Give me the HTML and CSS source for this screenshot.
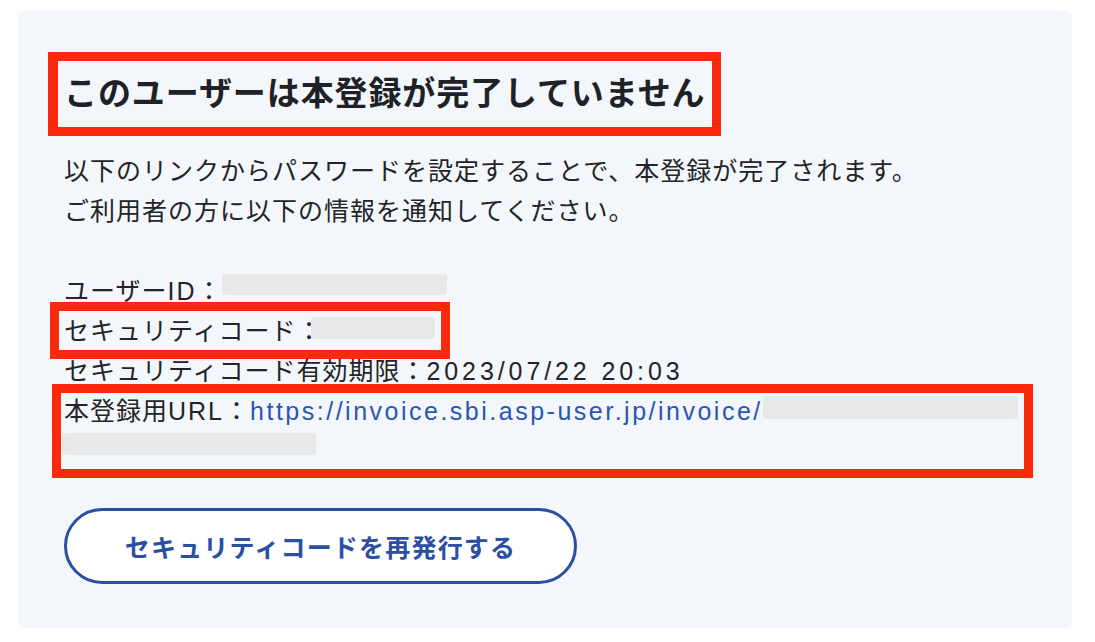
FILE: index.html
```html
<!DOCTYPE html>
<html lang="ja">
<head>
<meta charset="utf-8">
<title>本登録未完了</title>
<link rel="stylesheet" href="styles.css">
</head>
<body>
<div class="card">
  <h1 class="title">このユーザーは本登録が完了していません</h1>
  <p class="lead">以下のリンクからパスワードを設定することで、本登録が完了されます。<br>ご利用者の方に以下の情報を通知してください。</p>
  <div class="info">
    <div class="row">ユーザー<span class="lat">ID</span>：<span class="redact r-id"></span></div>
    <div class="row"><span class="hl-code">セキュリティコード：<span class="redact r-code"></span></span></div>
    <div class="row">セキュリティコード有効期限：<span class="num">2023/07/22 20:03</span></div>
    <div class="row hl-url">本登録用<span class="lat">URL</span>：<a class="link" href="#">https://invoice.sbi.asp-user.jp/invoice/<span class="redact r-url1"></span><br><span class="redact r-url2"></span></a></div>
  </div>
  <button class="reissue" type="button">セキュリティコードを再発行する</button>
</div>
</body>
</html>
```

FILE: styles.css
```css
* { box-sizing: border-box; }
html, body { margin: 0; padding: 0; background: #ffffff; }
body {
  font-family: "Liberation Sans", "Noto Sans CJK JP", sans-serif;
  color: #222427;
}
.card {
  margin: 11px 23px 0 18px;
  height: 617px;
  background: #f3f6fa;
  border-radius: 6px;
  padding: 41px 30px 45px 30px;
}
.title {
  margin: 0;
  width: fit-content;
  border: 9px solid #fb2a0d;
  border-left-width: 10px;
  padding: 0 7px 0 6px;
  height: 84px;
  line-height: 66px;
  font-size: 33px;
  font-weight: 700;
  letter-spacing: 0.9px;
  color: #1e2226;
}
.lead {
  margin: 15px 0 0 0;
  padding-left: 16px;
  font-size: 25px;
  line-height: 40px;
  letter-spacing: 1px;
}
.info {
  margin-top: 40px;
  font-size: 25px;
  line-height: 40px;
  letter-spacing: 1px;
}
.row {
  padding-left: 16px;
  height: 40px;
  white-space: nowrap;
}
.lat { letter-spacing: 2px; }
.num { letter-spacing: 3.9px; }
.hl-code {
  display: inline-block;
  margin-left: -5px;
  padding: 0 6px 0 5px;
  height: 39px;
  outline: 9px solid #fb2a0d;
}
.hl-url {
  height: 80px;
  margin-left: 11px;
  padding-left: 5px;
  width: 967px;
  outline: 9px solid #fb2a0d;
  outline-offset: -2px;
}
.link {
  color: #2b55b2;
  text-decoration: none;
  letter-spacing: 2.5px;
}
.redact {
  display: inline-block;
  background: #e8e8e8;
  border-radius: 3px;
}
.r-id { width: 225px; height: 21px; vertical-align: 5px; margin-left: -1px; }
.r-code { width: 124px; height: 22px; vertical-align: 1px; margin-left: -12px; }
.r-url1 { width: 255px; height: 23px; vertical-align: 1px; }
.r-url2 { width: 254px; height: 22px; vertical-align: 5px; margin-left: -2px; }
.reissue {
  display: block;
  margin: 37px 0 0 16px;
  width: 513px;
  height: 76px;
  border: 3px solid #2b4fa3;
  border-radius: 38px;
  background: #ffffff;
  color: #2b4fa3;
  font-family: "Liberation Sans", "Noto Sans CJK JP", sans-serif;
  font-size: 25px;
  font-weight: 700;
  letter-spacing: 1.2px;
  padding: 0;
}
```
